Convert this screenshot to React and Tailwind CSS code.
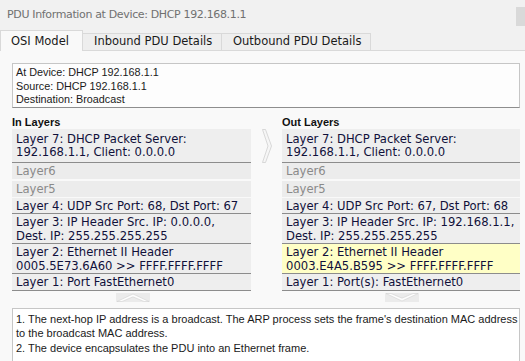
import React from "react";

const layerText = "text-[11.6px] leading-[13.5px] text-[#10103a] whitespace-nowrap";

function Layer({ children, hl, first }) {
  return (
    <div
      className={`${first ? "pt-[4px] pb-[2px]" : "pt-[2px] pb-0"} pl-[4px] border-b border-[#8c8c8c] ${hl ? "bg-[#ffffc6]" : "bg-[#eeeeee]"} ${layerText}`}
    >
      {children}
    </div>
  );
}

function Faded({ children, mb }) {
  return (
    <div className={`h-[16px] ${mb} pl-[4px] pt-[2px] bg-[#ececec] text-[11.6px] leading-[13px] text-[#8a8a8a]`}>
      {children}
    </div>
  );
}

function UpArrow() {
  return (
    <svg width="34" height="9" viewBox="0 0 34 9">
      <rect x="0" y="0" width="34" height="9" fill="#ebebeb" />
      <polygon points="1,8.5 17,1 33,8.5 28,8.5 17,3.8 6,8.5" fill="#fdfdfd" stroke="#d2d2d2" strokeWidth="0.6" />
    </svg>
  );
}

function DownArrow() {
  return (
    <svg width="34" height="9" viewBox="0 0 34 9">
      <rect x="0" y="0" width="34" height="9" fill="#ebebeb" />
      <polygon points="1,0.5 17,8 33,0.5 28,0.5 17,5.2 6,0.5" fill="#fdfdfd" stroke="#d2d2d2" strokeWidth="0.6" />
    </svg>
  );
}

function RightArrow() {
  return (
    <svg width="10" height="34" viewBox="0 0 10 34">
      <polygon points="0.5,0.5 3.5,0.5 9.5,17 3.5,33.5 0.5,33.5 6,17" fill="#f6f6f6" stroke="#cfcfcf" strokeWidth="0.8" />
    </svg>
  );
}

export default function App() {
  return (
    <div className="w-[525px] h-[361px] overflow-hidden bg-[#f1f1f1] font-['DejaVu_Sans',sans-serif] flex flex-col">
      {/* title */}
      <div className="h-[30px] shrink-0 flex items-start">
        <div className="pl-[7px] pt-[8px] text-[11px] leading-[14px] tracking-[-0.35px] text-[#707070] whitespace-nowrap">
          PDU Information at Device: DHCP 192.168.1.1
        </div>
        <div className="ml-auto mt-[7px] w-[9px] h-[19px] bg-[#d9d9d9]" />
      </div>

      {/* tabs */}
      <div className="h-[21px] shrink-0 flex items-end border-b border-[#d9d9d9]">
        <div className="h-[21px] w-[83px] -mb-px bg-[#f9f9f9] border-x border-t border-[#d9d9d9] pl-[10px] pt-[1px] flex items-center text-[11.5px] text-[#1a1a1a] whitespace-nowrap">
          OSI Model
        </div>
        <div className="h-[17px] w-[139px] bg-[#eeeeee] border-t border-r border-[#d9d9d9] pl-[11px] flex items-center text-[11.5px] text-[#1a1a1a] whitespace-nowrap">
          Inbound PDU Details
        </div>
        <div className="h-[17px] w-[149px] bg-[#eeeeee] border-t border-r border-[#d9d9d9] pl-[11px] flex items-center text-[11.5px] text-[#1a1a1a] whitespace-nowrap">
          Outbound PDU Details
        </div>
      </div>

      {/* content */}
      <div className="flex-1 bg-[#f9f9f9] pl-[12px] pr-[5px] pt-[12px] flex flex-col">
        <div className="bg-[#fdfdfd] border border-[#c6c6c6] border-b-[#8e8e8e] pl-[3px] pt-[2px] pb-0 font-['Liberation_Sans',Arial,sans-serif] text-[10.8px] leading-[13.5px] text-[#1a1a1a]">
          <div>At Device: DHCP 192.168.1.1</div>
          <div>Source: DHCP 192.168.1.1</div>
          <div>Destination: Broadcast</div>
        </div>

        <div className="mt-[8px] grid grid-cols-[239px_31px_238px]">
          {/* In layers */}
          <div className="flex flex-col">
            <div className="font-['Liberation_Sans',Arial,sans-serif] font-bold text-[11px] leading-[13px] text-[#111]">In Layers</div>
            <Layer first>
              Layer 7: DHCP Packet Server:
              <br />
              192.168.1.1, Client: 0.0.0.0
            </Layer>
            <Faded mb="mb-[2px]">Layer6</Faded>
            <Faded mb="mb-[1px]">Layer5</Faded>
            <Layer>Layer 4: UDP Src Port: 68, Dst Port: 67</Layer>
            <Layer>
              Layer 3: IP Header Src. IP: 0.0.0.0,
              <br />
              Dest. IP: 255.255.255.255
            </Layer>
            <Layer>
              Layer 2: Ethernet II Header
              <br />
              0005.5E73.6A60 &gt;&gt; FFFF.FFFF.FFFF
            </Layer>
            <Layer>Layer 1: Port FastEthernet0</Layer>
          </div>

          {/* middle arrow */}
          <div className="pt-[13px] flex justify-center">
            <div>
              <RightArrow />
            </div>
          </div>

          {/* Out layers */}
          <div className="flex flex-col">
            <div className="font-['Liberation_Sans',Arial,sans-serif] font-bold text-[11px] leading-[13px] text-[#111]">Out Layers</div>
            <Layer first>
              Layer 7: DHCP Packet Server:
              <br />
              192.168.1.1, Client: 0.0.0.0
            </Layer>
            <Faded mb="mb-[2px]">Layer6</Faded>
            <Faded mb="mb-[1px]">Layer5</Faded>
            <Layer>Layer 4: UDP Src Port: 67, Dst Port: 68</Layer>
            <Layer>
              Layer 3: IP Header Src. IP: 192.168.1.1,
              <br />
              Dest. IP: 255.255.255.255
            </Layer>
            <Layer hl>
              Layer 2: Ethernet II Header
              <br />
              0003.E4A5.B595 &gt;&gt; FFFF.FFFF.FFFF
            </Layer>
            <Layer>Layer 1: Port(s): FastEthernet0</Layer>
          </div>
        </div>

        {/* bottom arrows */}
        <div className="mt-[2px] grid grid-cols-[239px_31px_238px] h-[9px]">
          <div className="flex justify-center pl-[2px]">
            <UpArrow />
          </div>
          <div />
          <div className="flex justify-center pl-[1px]">
            <DownArrow />
          </div>
        </div>

        {/* description */}
        <div className="mt-[6px] h-[80px] shrink-0 bg-[#ffffff] border border-[#c6c6c6] pl-[3px] pt-[3px] font-['Liberation_Sans',Arial,sans-serif] text-[11px] leading-[14.5px] text-[#1a1a1a] whitespace-nowrap">
          <div>1. The next-hop IP address is a broadcast. The ARP process sets the frame's destination MAC address</div>
          <div>to the broadcast MAC address.</div>
          <div>2. The device encapsulates the PDU into an Ethernet frame.</div>
        </div>
      </div>
    </div>
  );
}
